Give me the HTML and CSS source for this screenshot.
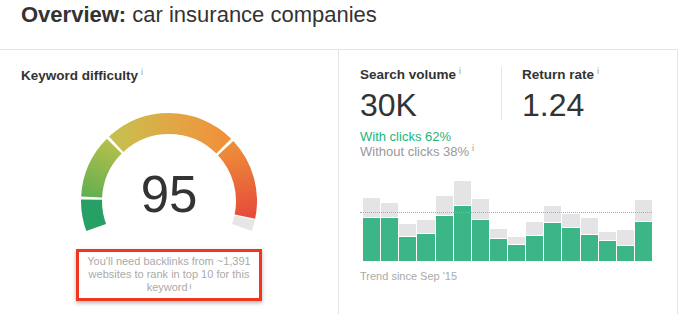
FILE: index.html
```html
<!DOCTYPE html>
<html lang="en">
<head>
    <meta charset="UTF-8">
    <meta name="viewport" content="width=device-width, initial-scale=1.0">
    <title>Overview: car insurance companies</title>
    <link rel="stylesheet" href="styles.css">
</head>
<body>

    <h1 class="page-title"><strong>Overview:</strong> car insurance companies</h1>

    <div class="panels">
        <!-- Keyword difficulty -->
        <section class="panel panel-kd">
            <h2 class="panel-label">Keyword difficulty<sup class="info">i</sup></h2>

            <div class="gauge">
                <svg class="gauge-arc" width="176" height="119" viewBox="0 0 176 119">
                    <defs>
                        <linearGradient id="kd-green" gradientUnits="userSpaceOnUse" x1="12" y1="100" x2="40" y2="28">
                            <stop offset="0" stop-color="#4fac50"/>
                            <stop offset="1" stop-color="#bcc04c"/>
                        </linearGradient>
                        <linearGradient id="kd-yellow" gradientUnits="userSpaceOnUse" x1="35" y1="40" x2="145" y2="40">
                            <stop offset="0" stop-color="#c6bf4e"/>
                            <stop offset="0.5" stop-color="#e1a845"/>
                            <stop offset="1" stop-color="#f0903a"/>
                        </linearGradient>
                        <linearGradient id="kd-red" gradientUnits="userSpaceOnUse" x1="145" y1="35" x2="165" y2="112">
                            <stop offset="0" stop-color="#ee8d39"/>
                            <stop offset="1" stop-color="#e5453a"/>
                        </linearGradient>
                    </defs>
                    <path class="seg" d="M15.17 114.51 A77.5 77.5 0 1 1 160.83 114.51" pathLength="220"
                          stroke="#27a065" stroke-dasharray="21 400" stroke-dashoffset="0"/>
                    <path class="seg" d="M15.17 114.51 A77.5 77.5 0 1 1 160.83 114.51" pathLength="220"
                          stroke="url(#kd-green)" stroke-dasharray="42 400" stroke-dashoffset="-23"/>
                    <path class="seg" d="M15.17 114.51 A77.5 77.5 0 1 1 160.83 114.51" pathLength="220"
                          stroke="url(#kd-yellow)" stroke-dasharray="88 400" stroke-dashoffset="-67"/>
                    <path class="seg" d="M15.17 114.51 A77.5 77.5 0 1 1 160.83 114.51" pathLength="220"
                          stroke="url(#kd-red)" stroke-dasharray="54.5 400" stroke-dashoffset="-157"/>
                    <path class="seg" d="M15.17 114.51 A77.5 77.5 0 1 1 160.83 114.51" pathLength="220"
                          stroke="#e6e6e6" stroke-dasharray="7.7 400" stroke-dashoffset="-212.3"/>
                </svg>
                <div class="gauge-value">95</div>
            </div>

            <p class="kd-note">You'll need backlinks from ~1,391 websites to rank in top 10 for this keyword<sup class="info">i</sup></p>
        </section>

        <!-- Search volume -->
        <section class="panel panel-sv">
            <div class="stats">
                <div class="stat stat-volume">
                    <h2 class="panel-label">Search volume<sup class="info">i</sup></h2>
                    <div class="stat-value">30K</div>
                </div>
                <div class="stat stat-return">
                    <h2 class="panel-label">Return rate<sup class="info">i</sup></h2>
                    <div class="stat-value">1.24</div>
                </div>
            </div>

            <div class="clicks clicks-with">With clicks 62%</div>
            <div class="clicks clicks-without">Without clicks 38%<sup class="info">i</sup></div>

            <div class="trend">
                <div class="trend-avg"></div>
                <div class="bar"><div class="bar-noclick" style="height:19px"></div><div class="bar-click" style="height:43px"></div></div>
                <div class="bar"><div class="bar-noclick" style="height:14px"></div><div class="bar-click" style="height:43px"></div></div>
                <div class="bar"><div class="bar-noclick" style="height:12px"></div><div class="bar-click" style="height:24px"></div></div>
                <div class="bar"><div class="bar-noclick" style="height:13px"></div><div class="bar-click" style="height:27px"></div></div>
                <div class="bar"><div class="bar-noclick" style="height:19px"></div><div class="bar-click" style="height:45px"></div></div>
                <div class="bar"><div class="bar-noclick" style="height:24px"></div><div class="bar-click" style="height:55px"></div></div>
                <div class="bar"><div class="bar-noclick" style="height:20px"></div><div class="bar-click" style="height:41px"></div></div>
                <div class="bar"><div class="bar-noclick" style="height:9px"></div><div class="bar-click" style="height:22px"></div></div>
                <div class="bar"><div class="bar-noclick" style="height:7px"></div><div class="bar-click" style="height:16px"></div></div>
                <div class="bar"><div class="bar-noclick" style="height:13px"></div><div class="bar-click" style="height:25px"></div></div>
                <div class="bar"><div class="bar-noclick" style="height:16px"></div><div class="bar-click" style="height:38px"></div></div>
                <div class="bar"><div class="bar-noclick" style="height:13px"></div><div class="bar-click" style="height:33px"></div></div>
                <div class="bar"><div class="bar-noclick" style="height:16px"></div><div class="bar-click" style="height:26px"></div></div>
                <div class="bar"><div class="bar-noclick" style="height:8px"></div><div class="bar-click" style="height:20px"></div></div>
                <div class="bar"><div class="bar-noclick" style="height:15px"></div><div class="bar-click" style="height:15px"></div></div>
                <div class="bar"><div class="bar-noclick" style="height:21px"></div><div class="bar-click" style="height:39px"></div></div>
            </div>
            <div class="trend-caption">Trend since Sep '15</div>
        </section>
    </div>

</body>
</html>
```

FILE: styles.css
```css
body {
    margin: 0;
    font-family: "Liberation Sans", Arial, sans-serif;
    color: #333;
    background-color: white;
    overflow: hidden;
}

.page-title {
    margin: 2px 0 0 21px;
    font-size: 22px;
    line-height: 26px;
    font-weight: normal;
    color: #333;
}

.page-title strong {
    font-weight: bold;
}

/* Panels */
.panels {
    display: flex;
    width: 678px;
    height: 265px;
    margin-top: 21px;
    box-sizing: border-box;
    border-top: 1px solid #e5e5e5;
    border-right: 1px solid #e5e5e5;
}

.panel {
    box-sizing: border-box;
}

.panel-label {
    margin: 0;
    font-size: 13.5px;
    line-height: 16px;
    font-weight: bold;
    color: #333;
}

.info {
    font-size: 9px;
    font-weight: normal;
    color: #999;
    margin-left: 3px;
    vertical-align: 5px;
    line-height: 0;
}

/* Keyword difficulty */
.panel-kd {
    width: 339px;
    border-right: 1px solid #e5e5e5;
    padding-top: 18px;
    display: flex;
    flex-direction: column;
    align-items: center;
}

.panel-kd .panel-label {
    align-self: stretch;
    padding-left: 21px;
}

.gauge {
    position: relative;
    width: 176px;
    height: 119px;
    margin-top: 29px;
}

.gauge-arc {
    display: block;
}

.gauge-arc .seg {
    fill: none;
    stroke-width: 21px;
}

.gauge-value {
    position: absolute;
    left: 0;
    right: 0;
    top: 56px;
    text-align: center;
    font-size: 51px;
    line-height: 51px;
    color: #333;
}

.kd-note {
    width: 186px;
    margin: 17px 0 0;
    padding: 3px 4px 5px;
    box-sizing: border-box;
    border: 3px solid #f1361f;
    box-shadow: 0 2px 4px rgba(0, 0, 0, 0.3);
    font-size: 11px;
    line-height: 12.8px;
    text-align: center;
    color: #aaa;
}

.kd-note .info {
    font-size: 8px;
    margin-left: 2px;
    vertical-align: 2px;
}

/* Search volume */
.panel-sv {
    flex: 1;
    padding: 17px 0 0 21px;
}

.stats {
    display: flex;
}

.stat-volume {
    width: 141px;
    border-right: 1px solid #e5e5e5;
}

.stat-return {
    padding-left: 20px;
}

.stat-value {
    margin-top: 7px;
    font-size: 32px;
    line-height: 30px;
    color: #333;
}

.clicks {
    font-size: 13px;
    line-height: 15px;
}

.clicks-with {
    margin-top: 9px;
    color: #1db37a;
}

.clicks-without {
    color: #999;
}

.trend {
    position: relative;
    display: flex;
    align-items: flex-end;
    gap: 1px;
    width: 292px;
    height: 90px;
    margin-top: 12px;
    padding-left: 3px;
    box-sizing: border-box;
}

.trend-avg {
    position: absolute;
    left: 0;
    right: 0;
    top: 41px;
    border-top: 1px dotted #a8a8a8;
    z-index: 1;
}

.bar {
    flex: 1;
    display: flex;
    flex-direction: column;
    justify-content: flex-end;
}

.bar-noclick {
    background-color: #e4e4e6;
    margin-bottom: 1px;
}

.bar-click {
    background-color: #3cb687;
}

.trend-caption {
    margin-top: 9px;
    font-size: 11px;
    line-height: 13px;
    color: #aaa;
}
```
